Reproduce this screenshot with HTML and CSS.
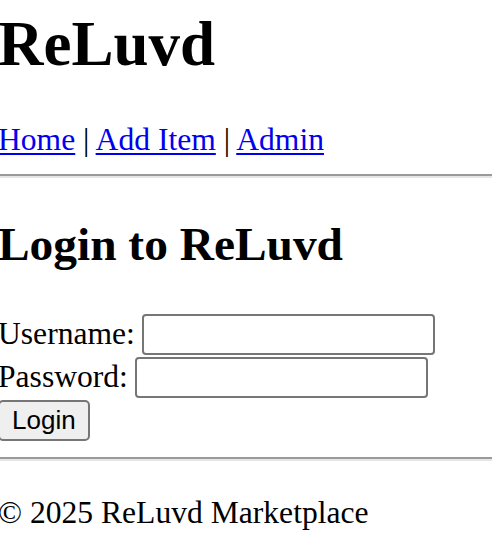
FILE: index.html
```html
<!DOCTYPE html>
<html lang="en">
<head>
<meta charset="utf-8">
<title>ReLuvd</title>
<link rel="stylesheet" href="styles.css">
</head>
<body>
<header class="site-header">
  <h1 class="site-title">ReLuvd</h1>
  <nav class="site-nav"><a href="#">Home</a> | <a href="#">Add Item</a> | <a href="#">Admin</a></nav>
</header>
<hr class="rule">
<main>
  <h2 class="page-title">Login to ReLuvd</h2>
  <form class="login-form">
    <div class="form-row"><label for="u">Username:</label><input id="u" class="text-input" type="text"></div>
    <div class="form-row"><label for="p">Password:</label><input id="p" class="text-input" type="password"></div>
    <div class="form-row"><button class="btn" type="button">Login</button></div>
  </form>
</main>
<hr class="rule">
<footer class="site-footer">
  <p class="footer-text">© 2025 ReLuvd Marketplace</p>
</footer>
</body>
</html>
```

FILE: styles.css
```css
html, body {
  background: #ffffff;
}
body {
  margin: 0 0 0 -2px;
  font-family: "Liberation Serif", "Times New Roman", serif;
  font-size: 31.6px;
  line-height: 1.149;
  color: #000000;
}
.site-title {
  font-size: 63px;
  font-weight: bold;
  line-height: 1.149;
  margin: 8px 0 42px 0;
}
.site-nav {
  line-height: 1.149;
}
.site-nav a {
  color: #0000ee;
  text-decoration: underline;
  text-decoration-thickness: 2px;
  text-underline-offset: 3px;
}
.rule {
  height: 0;
  margin: 15.6px 0;
  border: 0;
  border-top: 2px solid #9a9a9a;
  border-bottom: 2px solid #e6e6e6;
}
.page-title {
  font-size: 47.4px;
  font-weight: bold;
  line-height: 1.149;
  margin: 38.8px 0 41px 0;
}
.login-form {
  margin: 0;
}
.form-row {
  display: flex;
  align-items: center;
  gap: 7px;
  height: 43px;
}
.text-input {
  box-sizing: border-box;
  width: 293px;
  height: 41px;
  margin: 0;
  border: 2px solid #767676;
  border-radius: 4px;
  background: #ffffff;
  font-family: "Liberation Sans", Arial, sans-serif;
  font-size: 26px;
  padding: 2px 4px;
}
.btn {
  box-sizing: border-box;
  height: 41px;
  margin: 0;
  padding: 0 12px;
  border: 2px solid #767676;
  border-radius: 5px;
  background: #efefef;
  color: #000000;
  font-family: "Liberation Sans", Arial, sans-serif;
  font-size: 26px;
  line-height: 1;
}
.footer-text {
  margin: 34px 0;
}
```
